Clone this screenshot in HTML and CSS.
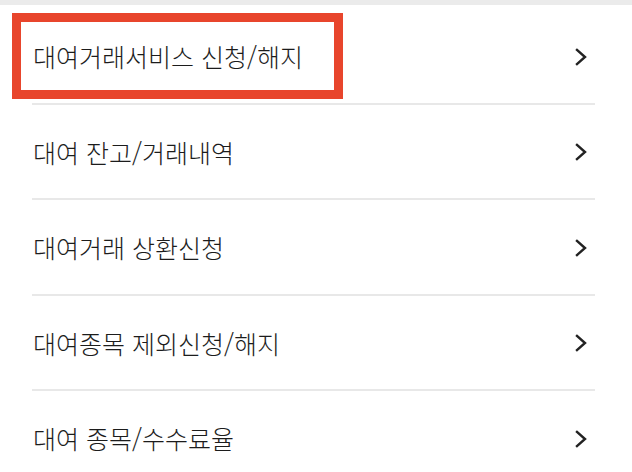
FILE: index.html
```html
<!DOCTYPE html>
<html lang="ko">
<head>
<meta charset="utf-8">
<link rel="stylesheet" href="styles.css">
</head>
<body>
<div class="topbar"></div>
<ul class="menu">
  <li class="item"><span class="label">대여거래서비스 신청/해지</span><svg class="chev" viewBox="0 0 12 18"><path d="M2 2 L10 9 L2 16" /></svg></li>
  <li class="item"><span class="label">대여 잔고/거래내역</span><svg class="chev" viewBox="0 0 12 18"><path d="M2 2 L10 9 L2 16" /></svg></li>
  <li class="item"><span class="label">대여거래 상환신청</span><svg class="chev" viewBox="0 0 12 18"><path d="M2 2 L10 9 L2 16" /></svg></li>
  <li class="item"><span class="label">대여종목 제외신청/해지</span><svg class="chev" viewBox="0 0 12 18"><path d="M2 2 L10 9 L2 16" /></svg></li>
  <li class="item"><span class="label">대여 종목/수수료율</span><svg class="chev" viewBox="0 0 12 18"><path d="M2 2 L10 9 L2 16" /></svg></li>
</ul>
<div class="highlight"></div>
</body>
</html>
```
FILE: styles.css
```css
html, body {
  margin: 0;
  padding: 0;
  background: #ffffff;
  width: 632px;
  height: 472px;
  overflow: hidden;
  position: relative;
  font-family: "Noto Sans CJK KR", "Noto Sans", sans-serif;
}
.topbar {
  height: 5px;
  background: #ebebeb;
}
.menu {
  list-style: none;
  margin: 0;
  padding: 4px 37px 0 32px;
}
.item {
  box-sizing: border-box;
  height: 95.5px;
  border-bottom: 2px solid #e8e8e8;
  display: flex;
  align-items: center;
  justify-content: space-between;
  padding: 2px 8px 0 1px;
}
.label {
  font-size: 25px;
  font-weight: 300;
  color: #1c1c1c;
  line-height: 1;
}
.chev {
  width: 12px;
  height: 18px;
  fill: none;
  stroke: #222222;
  stroke-width: 2.4;
  stroke-linecap: square;
  stroke-linejoin: miter;
}
.highlight {
  position: absolute;
  left: 12px;
  top: 13px;
  width: 331px;
  height: 86px;
  box-sizing: border-box;
  border: 9px solid #e8452c;
}
```
